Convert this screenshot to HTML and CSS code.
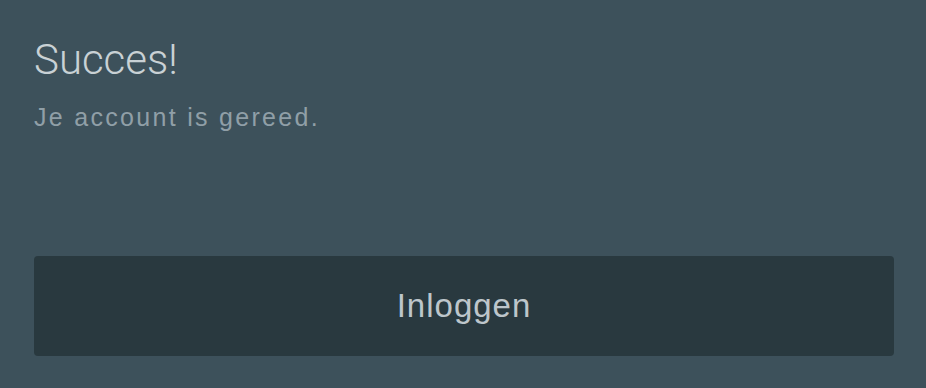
FILE: index.html
```html
<!DOCTYPE html>
<html lang="nl">
<head>
<meta charset="utf-8">
<title>Succes!</title>
<link rel="stylesheet" href="styles.css">
</head>
<body>
<main class="panel">
  <h1 class="title">Succes!</h1>
  <p class="message">Je account is gereed.</p>
  <button class="login" type="button">Inloggen</button>
</main>
</body>
</html>
```
FILE: styles.css
```css
html, body {
  margin: 0;
  padding: 0;
  background: #3d515b;
}
body {
  width: 926px;
  height: 388px;
  overflow: hidden;
}
.panel {
  display: flex;
  flex-direction: column;
  padding: 36px 32px 0 34px;
}
.title {
  margin: 0;
  font-family: Roboto, "Liberation Sans", sans-serif;
  font-weight: 300;
  font-size: 42px;
  line-height: 48px;
  color: #c9d1d5;
  letter-spacing: 0;
}
.message {
  margin: 18px 0 0 0;
  font-family: "Liberation Sans", Arial, sans-serif;
  font-size: 25px;
  line-height: 30px;
  letter-spacing: 2.3px;
  color: #909fa7;
}
.login {
  margin-top: 124px;
  height: 100px;
  border: none;
  border-radius: 4px;
  background: #29393f;
  color: #bdc6cb;
  font-family: "Liberation Sans", Arial, sans-serif;
  font-size: 33px;
  letter-spacing: 1px;
  padding: 0;
  cursor: pointer;
}
```
